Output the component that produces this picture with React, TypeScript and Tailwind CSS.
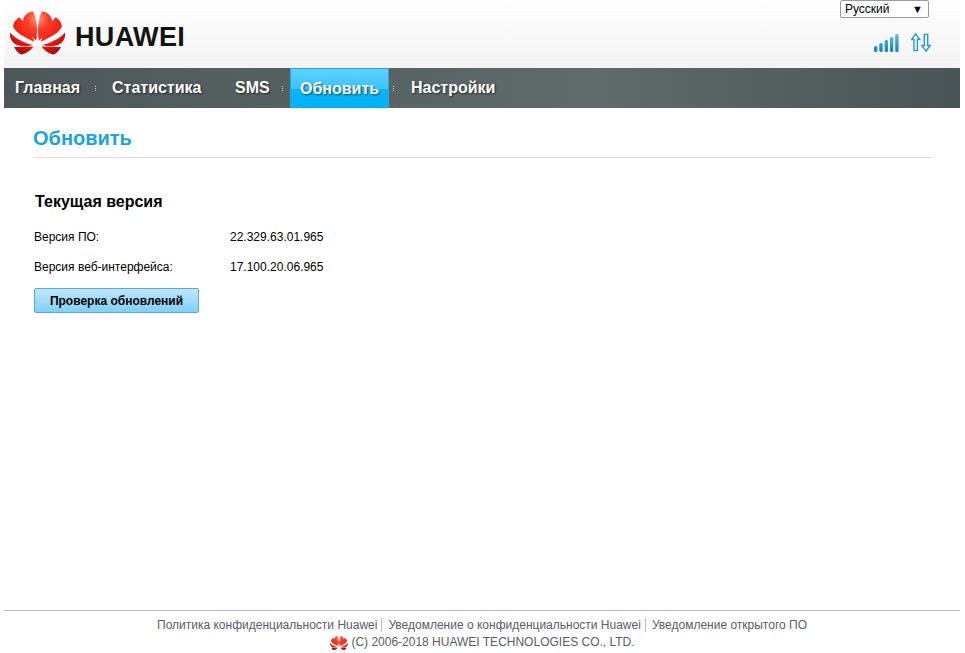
const Logo = ({ size, className = "" }: { size: number; className?: string }) => {
  const petals = [
    "M93 106 C74 90 50 66 54 44 C57 30 70 22 83 19 C94 36 99 76 93 106 Z",
    "M87 110 C62 98 30 84 24 63 C26 52 34 42 43 37 C62 58 80 84 87 110 Z",
    "M83 119 C60 114 32 102 15 82 C13 100 22 114 38 120 C54 125 72 124 83 119 Z",
    "M85 124 L27 125 C33 136 42 146 50 148 C63 145 76 137 85 124 Z",
  ];
  const id = `g${size}`;
  return (
    <svg width={size} height={(size * 130) / 164} viewBox="15 18 164 130" className={className}>
      <defs>
        <radialGradient id={id} gradientUnits="userSpaceOnUse" cx="97" cy="40" r="110">
          <stop offset="0" stopColor="#ff9a78" />
          <stop offset="0.3" stopColor="#fb3d28" />
          <stop offset="0.72" stopColor="#f01c12" />
          <stop offset="1" stopColor="#b00d10" />
        </radialGradient>
      </defs>
      {petals.map((d, i) => (
        <path key={i} d={d} fill={`url(#${id})`} />
      ))}
      <g transform="translate(194,0) scale(-1,1)">
        {petals.map((d, i) => (
          <path key={i} d={d} fill={`url(#${id})`} />
        ))}
      </g>
    </svg>
  );
};

const Sep = () => (
  <span className="flex flex-col gap-px w-px">
    <i className="block w-px h-px bg-[#c9cfcf]" />
    <i className="block w-px h-px bg-[#c9cfcf]" />
    <i className="block w-px h-px bg-[#c9cfcf]" />
  </span>
);

export default function App() {
  return (
    <div className="w-[965px] h-[653px] bg-white pl-1 pr-[5px] flex flex-col overflow-hidden font-['Liberation_Sans',Arial,sans-serif]">
      <header className="h-[68px] flex justify-between bg-gradient-to-b from-white to-[#f3f3f3]">
        <div className="flex items-start pl-1.5 pt-[11px] gap-[10px]">
          <Logo size={55} />
          <span className="text-[27px] leading-none font-bold text-[#141414] tracking-[0.35px] mt-[13px]">HUAWEI</span>
        </div>
        <div className="flex flex-col items-end pr-[31px]">
          <div className="w-[89px] h-[18px] border border-[#999] rounded-[2px] bg-white flex items-center justify-between pl-1 pr-[5px] text-[12px] leading-none text-black">
            <span>Русский</span>
            <span className="text-[11px]">▼</span>
          </div>
          <div className="flex items-end gap-[12px] mt-[15px] -mr-[2px]">
            <svg width="25" height="19" viewBox="0 0 25 19">
              <defs>
                <linearGradient id="sig" x1="0" y1="0" x2="0" y2="19" gradientUnits="userSpaceOnUse">
                  <stop offset="0" stopColor="#5cc4ee" />
                  <stop offset="1" stopColor="#1a7fb5" />
                </linearGradient>
              </defs>
              <rect x="0" y="13" width="3.4" height="6" rx="1.5" fill="url(#sig)" />
              <rect x="5.3" y="10" width="3.4" height="9" rx="1.5" fill="url(#sig)" />
              <rect x="10.6" y="6.7" width="3.4" height="12.3" rx="1.5" fill="url(#sig)" />
              <rect x="15.9" y="4" width="3.4" height="15" rx="1.5" fill="url(#sig)" />
              <rect x="21.2" y="1" width="3.4" height="18" rx="1.5" fill="url(#sig)" />
            </svg>
            <svg width="20" height="19" viewBox="0 0 20 19" fill="none" stroke="#1f9ad8" strokeWidth="1.4">
              <path d="M4.7 0.8 L0.6 6.5 H3 V17.6 H6.4 V6.5 H8.8 Z" />
              <path d="M15 18.2 L10.9 12.5 H13.3 V1.4 H16.7 V12.5 H19.1 Z" />
            </svg>
          </div>
        </div>
      </header>

      <nav className="h-10 flex items-stretch bg-gradient-to-r from-[#4d5759] via-[#5f6b6a] via-[62%] to-[#4a5355] text-white font-bold text-[16px] [text-shadow:1px_1px_2px_rgba(0,0,0,0.6)]">
        <div className="w-[91px] flex items-center pl-[11px]">Главная</div>
        <div className="flex items-center"><Sep /></div>
        <div className="w-[122px] flex items-center pl-4">Статистика</div>
        <div className="w-[64px] flex items-center pl-[17px]">SMS</div>
        <div className="flex items-center"><Sep /></div>
        <div className="w-[99px] ml-[7px] flex items-center justify-center border-t border-l border-r border-[#2aa6dc] bg-[linear-gradient(#5bd2ff_0%,#3cc4fb_50%,#09b4f5_52%,#00b2f4_100%)]">Обновить</div>
        <div className="flex items-center ml-[4px]"><Sep /></div>
        <div className="flex items-center pl-[17px]">Настройки</div>
      </nav>

      <main className="flex-1 pl-[29px] pr-[27px] pt-[18px]">
        <h1 className="text-[20px] leading-[24px] font-bold text-[#1ba4d8] pb-[7px] border-b border-[#dcdcdc]">Обновить</h1>
        <h2 className="text-[16px] leading-[18px] font-bold text-black mt-[35px] ml-[2px]">Текущая версия</h2>
        <div className="mt-[19px] ml-[1px] text-[12px] leading-[14px] text-black flex flex-col gap-4">
          <div className="flex"><span className="w-[196px]">Версия ПО:</span><span>22.329.63.01.965</span></div>
          <div className="flex"><span className="w-[196px]">Версия веб-интерфейса:</span><span>17.100.20.06.965</span></div>
        </div>
        <button className="block mt-[14px] ml-[1px] w-[165px] h-[25px] rounded-[2px] border border-[#5aa9d6] bg-gradient-to-b from-[#bfe6fb] to-[#7fd0f8] text-[12px] font-bold text-black">Проверка обновлений</button>
      </main>

      <footer className="h-[43px] border-t border-[#bdbdbd] text-[12px] leading-[14px] text-[#5b5b6b] flex flex-col items-center pt-[7px]">
        <div className="flex items-center">
          <span>Политика конфиденциальности Huawei</span>
          <span className="w-px h-[14px] bg-[#bdbdbd] ml-[4px] mr-[6px]" />
          <span>Уведомление о конфиденциальности Huawei</span>
          <span className="w-px h-[14px] bg-[#bdbdbd] ml-[4px] mr-[6px]" />
          <span>Уведомление открытого ПО</span>
        </div>
        <div className="flex items-center mt-px ml-px">
          <Logo size={18} className="mt-[3px] mr-[3px]" />
          <span>(C) 2006-2018 HUAWEI TECHNOLOGIES CO., LTD.</span>
        </div>
      </footer>
    </div>
  );
}
